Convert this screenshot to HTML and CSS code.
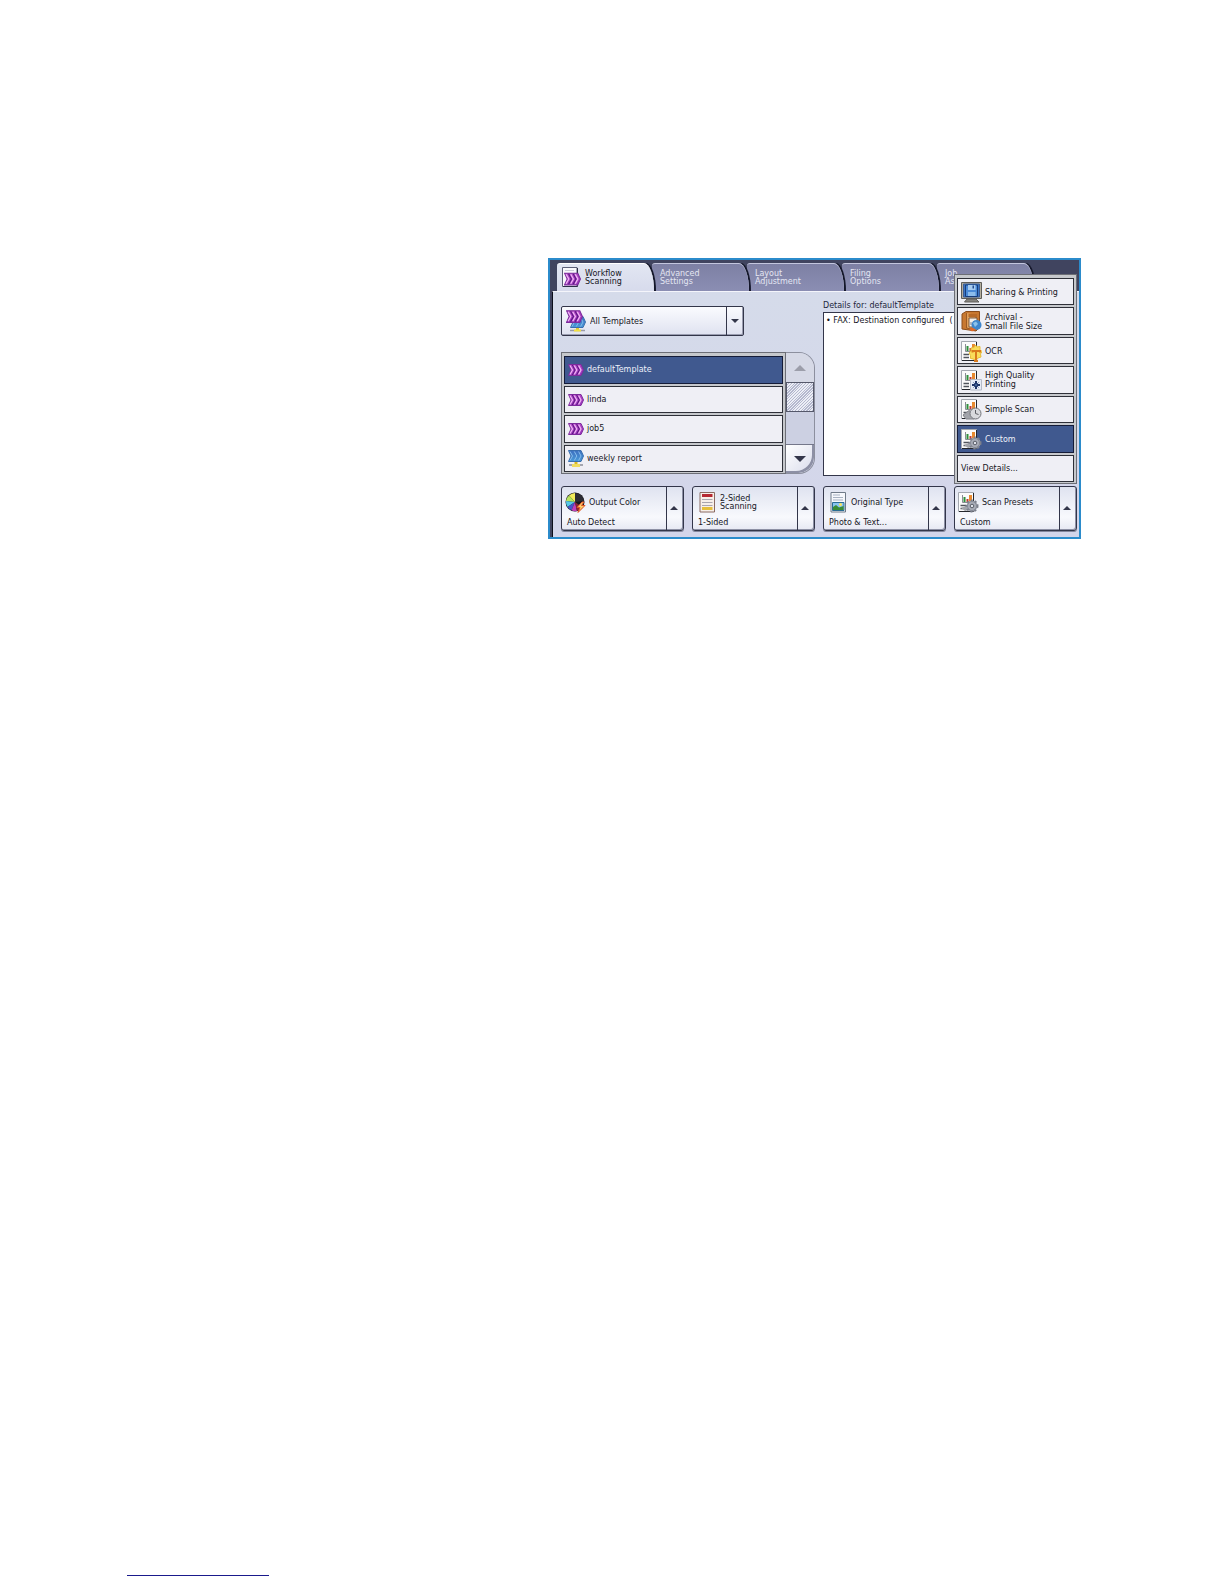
FILE: index.html
```html
<!DOCTYPE html>
<html lang="en">
<head>
  <meta charset="UTF-8" />
  <meta name="viewport" content="width=device-width, initial-scale=1.0"/>
  <title>Workflow Scanning</title>
  <link rel="stylesheet" href="styles.css">
</head>
<body>

<!-- Icon definitions -->
<svg class="defs" aria-hidden="true">
  <defs>
    <linearGradient id="purple" x1="0" y1="0" x2="0" y2="1">
      <stop offset="0" stop-color="#b044c4"/>
      <stop offset="1" stop-color="#9a34bc"/>
    </linearGradient>
    <linearGradient id="blue" x1="0" y1="0" x2="0" y2="1">
      <stop offset="0" stop-color="#3d6fc0"/>
      <stop offset="1" stop-color="#4a9ad8"/>
    </linearGradient>
    <symbol id="chevrons" viewBox="0 0 16 12">
      <path d="M0.5 0.5H13L15.5 6L13 11.5H0.5L3 6Z" fill="url(#purple)" stroke="#7c2c9c"/>
      <path d="M2 1.500L4.500 6L2 10.500M6.300 1.500L8.800 6L6.300 10.500M10.600 1.500L13 6L10.600 10.500" fill="none" stroke="#f0b4f4" stroke-width="1.300"/>
      <path d="M4.300 1L7 6L4.300 11M8.600 1L11.300 6L8.600 11" fill="none" stroke="#5a1a80"/>
    </symbol>
    <symbol id="chevrons-blue" viewBox="0 0 16 12">
      <path d="M0.5 0.5H13L15.5 6L13 11.5H0.5L3 6Z" fill="url(#blue)" stroke="#3a6eae"/>
      <path d="M2 1.500L4.500 6L2 10.500M6.300 1.500L8.800 6L6.300 10.500M10.600 1.500L13 6L10.600 10.500" fill="none" stroke="#86bcec"/>
    </symbol>
    <symbol id="network" viewBox="0 0 16 18">
      <use href="#chevrons-blue" width="16" height="12"/>
      <path d="M8 12V15" stroke="#d8b820" stroke-width="3"/>
      <path d="M1 15H15" stroke="#a4a6b0" stroke-width="2"/>
      <path d="M4 15.500H12" stroke="#f0dc60" stroke-width="3"/>
    </symbol>
    <symbol id="workflow" viewBox="0 0 20 22">
      <path d="M1.500 1.500H16V20.500H1.500Z" fill="#f8f8fc" stroke="#5c6078"/>
      <path d="M4 4.500H13" stroke="#c8cad6"/>
      <path d="M2 20.500H16.500V2" fill="none" stroke="#2c3048"/>
      <use href="#chevrons" x="3" y="6" width="17" height="14"/>
    </symbol>
    <symbol id="templates" viewBox="0 0 20 22">
      <use href="#chevrons-blue" x="4" y="6" width="16" height="12"/>
      <use href="#chevrons" x="0" y="0" width="17" height="13"/>
      <path d="M11.500 18V20" stroke="#e0c830" stroke-width="3"/>
      <path d="M4 20.500H19" stroke="#9a9ca8" stroke-width="1.500"/>
      <path d="M8 20.500H15" stroke="#f2e040" stroke-width="2"/>
    </symbol>
    <symbol id="color" viewBox="0 0 21 21">
      <circle cx="10" cy="10" r="9.500" fill="#17171c"/>
      <path d="M10 10V1A9 9 0 0 0 4 3.500Z" fill="#f3ec5a"/>
      <path d="M10 10L4 3.500A9 9 0 0 0 1 9Z" fill="#b7e45c"/>
      <path d="M10 10L1 9A9 9 0 0 0 2.500 15Z" fill="#55c8e8"/>
      <path d="M10 10L2.500 15A9 9 0 0 0 6.500 18.300Z" fill="#4556c8"/>
      <path d="M10 10L6.500 18.300A9 9 0 0 0 12 19Z" fill="#c040b8"/>
      <path d="M10 10V1A9 9 0 0 1 19 9Z" fill="#2c2c34"/>
      <path d="M10 10L12 19A9 9 0 0 0 17 15Z" fill="#8c2430"/>
      <path d="M17 10L12 15.500H15L13 20.500L20 13.500H16.500L19 10Z" fill="#ffcf6a" stroke="#e0562a"/>
    </symbol>
    <symbol id="sides" viewBox="0 0 21 21">
      <path d="M4 0.500H18.500V20H4Z" fill="#f7efe9" stroke="#8a6a62"/>
      <path d="M6 3.500H16.500" stroke="#b52832" stroke-width="3"/>
      <path d="M6 7.500H16.500M6 10.500H16.500M6 13.500H16.500" stroke="#a9a5ae"/>
      <path d="M6 16.500H16.500" stroke="#e6bf3c" stroke-width="3"/>
    </symbol>
    <symbol id="original" viewBox="0 0 21 21">
      <path d="M4 0.500H18.500V20H4Z" fill="#f6f8fc" stroke="#6f7a88"/>
      <path d="M6 3H13M6 5.500H16M6 8H16" stroke="#a8b2c2"/>
      <path d="M5.500 10.500H17V18.500H5.500Z" fill="#8ac4f0" stroke="#2a6d94"/>
      <path d="M6 18V15L9 13L12 15.500L16.500 14V18Z" fill="#3a8c34"/>
      <circle cx="13.500" cy="12.500" r="1.500" fill="#fbe45a"/>
    </symbol>
    <symbol id="chart-page" viewBox="0 0 21 21">
      <path d="M0.500 0.500H15.500V19.500H0.500Z" fill="#fbfbfb" stroke="#a4a8b0"/>
      <path d="M15.500 1V19.500H1" fill="none" stroke="#24262c"/>
      <path d="M4.500 3V10.500H14" fill="none" stroke="#8a8d94"/>
      <path d="M6.500 10V5" stroke="#2f8f3a" stroke-width="2"/>
      <path d="M9.500 10V7" stroke="#c03a30" stroke-width="2"/>
      <path d="M12.500 10V3" stroke="#e88a30" stroke-width="3"/>
      <path d="M2.500 13.500H8M2.500 16.500H8M10 13.500H14M10 16.500H14" stroke="#50545c" stroke-width="1.500"/>
    </symbol>
    <symbol id="monitor" viewBox="0 0 21 21">
      <path d="M0.500 0.500H20.500V16.500H0.500Z" fill="#b4ae9e" stroke="#5e5c58"/>
      <path d="M2.500 2H18.500V15H2.500Z" fill="#3a74c4" stroke="#3c5c94"/>
      <path d="M4.500 3H16.500V14.500H4.500Z" fill="#4a8ad8" stroke="#173c7a"/>
      <path d="M7 3H14.500V8H7Z" fill="#a8ccf0"/>
      <path d="M11.500 3.500H13V6.500H11.500Z" fill="#244c90"/>
      <path d="M7 10H14.500V14H7Z" fill="#8cbcec"/>
      <path d="M6 17H15L18 20H3.500Z" fill="#85837e" stroke="#5e5c58"/>
    </symbol>
    <symbol id="archive" viewBox="0 0 21 21">
      <path d="M1 3L5 0.500H18.500V16.500L15 20L1 18Z" fill="#c87830" stroke="#8a4c1a"/>
      <path d="M5.500 2V17L15 19V4" fill="#e2a05a" stroke="#9a5a24"/>
      <path d="M7.500 3H16V6H7.500Z" fill="#b86a28"/>
      <path d="M8 7H16V16H8Z" fill="#f4f0ea" stroke="#7a5a40"/>
      <path d="M10 14V11M12.500 14V10" stroke="#7c8090"/>
      <circle cx="15.500" cy="14" r="5" fill="#3f86cc"/>
      <path d="M12 12L15 10.500L17 13L14 16Z" fill="#8dc2ea"/>
      <path d="M8 18L11 16.500L15 18.500L11 20.500Z" fill="#e06a28"/>
    </symbol>
    <symbol id="ocr" viewBox="0 0 21 21">
      <use href="#chart-page" width="21" height="21"/>
      <path d="M14.500 4L16 6L19 5.500V8.500L21 10.500L19.500 13L20 16L17 17L15 19.500L12 18L9.500 17.500V14.500L8 12L10 10L10 7L13 6.500Z" fill="#f9dc5a" stroke="#e8bc38"/>
      <path d="M11.500 11.500V10H19V11.500M15 10V20M13 20H17" fill="none" stroke="#d97a1c" stroke-width="2"/>
    </symbol>
    <symbol id="quality" viewBox="0 0 21 21">
      <use href="#chart-page" width="21" height="21"/>
      <path d="M9.500 9.500H20.500V20H9.500Z" fill="#e4eaf6" stroke="#b4bac8"/>
      <path d="M15 11V19M11 15H19" stroke="#1c3468" stroke-width="2"/>
      <path d="M12.500 12.500L17.500 17.500M17.500 12.500L12.500 17.500" stroke="#3f5f98"/>
    </symbol>
    <symbol id="simple" viewBox="0 0 21 21">
      <use href="#chart-page" width="21" height="21"/>
      <path d="M2 16L8 11.500L13 14V20H5Z" fill="#a2a4aa" stroke="#84868c"/>
      <circle cx="14.500" cy="14.500" r="5.500" fill="#d8d9dd" stroke="#73757c"/>
      <path d="M14.500 11V14.500L17.500 15.500" fill="none" stroke="#5c5e64"/>
    </symbol>
    <symbol id="gear" viewBox="0 0 21 21">
      <use href="#chart-page" width="21" height="21"/>
      <path d="M3 16L8 14L11 18L7 19Z" fill="#a2a4aa"/>
      <circle cx="14" cy="14" r="5.500" fill="#a9adb8" stroke="#7c808c" stroke-width="2" stroke-dasharray="2 2"/>
      <circle cx="14" cy="14" r="4.500" fill="#a9adb8" stroke="#868a96"/>
      <circle cx="14" cy="14" r="1.800" fill="#dfe2ea" stroke="#5a5e68"/>
    </symbol>
    <symbol id="up" viewBox="0 0 10 5"><path d="M5 0L10 5H0Z" fill="currentColor"/></symbol>
    <symbol id="down" viewBox="0 0 10 5"><path d="M0 0H10L5 5Z" fill="currentColor"/></symbol>
  </defs>
</svg>

<main>
  <section class="screen">

    <!-- Tabs -->
    <nav class="tabs">
      <button type="button" class="tab active"><svg class="icon-tab"><use href="#workflow"/></svg><span>Workflow<br>Scanning</span></button>
      <button type="button" class="tab"><span>Advanced<br>Settings</span></button>
      <button type="button" class="tab"><span>Layout<br>Adjustment</span></button>
      <button type="button" class="tab"><span>Filing<br>Options</span></button>
      <button type="button" class="tab"><span>Job<br>Assembly</span></button>
    </nav>

    <div class="panel">
      <div class="content">

        <!-- Template picker -->
        <div class="templates">
          <div class="picker">
            <svg class="icon-tab"><use href="#templates"/></svg>
            <select aria-label="Templates">
              <option>All Templates</option>
            </select>
            <span class="arrow"><svg><use href="#down"/></svg></span>
          </div>
          <div class="list-area">
            <div class="list">
              <button type="button" class="row selected"><svg class="icon-row"><use href="#chevrons"/></svg>defaultTemplate</button>
              <button type="button" class="row"><svg class="icon-row"><use href="#chevrons"/></svg>linda</button>
              <button type="button" class="row"><svg class="icon-row"><use href="#chevrons"/></svg>job5</button>
              <button type="button" class="row"><svg class="icon-row tall"><use href="#network"/></svg>weekly report</button>
            </div>
            <div class="scrollbar">
              <button type="button" class="scroll-up" aria-label="Scroll up" disabled><svg><use href="#up"/></svg></button>
              <div class="thumb"></div>
              <button type="button" class="scroll-down" aria-label="Scroll down"><svg><use href="#down"/></svg></button>
            </div>
          </div>
        </div>

        <!-- Template details -->
        <div class="details">
          <div class="details-title">Details for: defaultTemplate</div>
          <div class="details-box">• FAX: Destination configured&nbsp; (</div>
        </div>
      </div>

      <!-- Scan options -->
      <div class="options">
        <button type="button" class="option">
          <span class="option-body">
            <span class="option-name"><svg class="icon"><use href="#color"/></svg>Output Color</span>
            <span>Auto Detect</span>
          </span>
          <span class="arrow"><svg><use href="#up"/></svg></span>
        </button>
        <button type="button" class="option">
          <span class="option-body">
            <span class="option-name"><svg class="icon"><use href="#sides"/></svg><span>2-Sided<br>Scanning</span></span>
            <span>1-Sided</span>
          </span>
          <span class="arrow"><svg><use href="#up"/></svg></span>
        </button>
        <button type="button" class="option">
          <span class="option-body">
            <span class="option-name"><svg class="icon"><use href="#original"/></svg>Original Type</span>
            <span>Photo &amp; Text...</span>
          </span>
          <span class="arrow"><svg><use href="#up"/></svg></span>
        </button>
        <div class="presets">
          <button type="button" class="option" aria-haspopup="menu" aria-expanded="true">
            <span class="option-body">
              <span class="option-name"><svg class="icon"><use href="#gear"/></svg>Scan Presets</span>
              <span>Custom</span>
            </span>
            <span class="arrow"><svg><use href="#up"/></svg></span>
          </button>
          <div class="menu" role="menu">
            <button type="button" role="menuitem" class="row"><svg class="icon"><use href="#monitor"/></svg>Sharing &amp; Printing</button>
            <button type="button" role="menuitem" class="row"><svg class="icon"><use href="#archive"/></svg><span>Archival -<br>Small File Size</span></button>
            <button type="button" role="menuitem" class="row"><svg class="icon"><use href="#ocr"/></svg>OCR</button>
            <button type="button" role="menuitem" class="row"><svg class="icon"><use href="#quality"/></svg><span>High Quality<br>Printing</span></button>
            <button type="button" role="menuitem" class="row"><svg class="icon"><use href="#simple"/></svg>Simple Scan</button>
            <button type="button" role="menuitem" class="row selected"><svg class="icon"><use href="#gear"/></svg>Custom</button>
            <button type="button" role="menuitem" class="row">View Details...</button>
          </div>
        </div>
      </div>
    </div>
  </section>
</main>

<footer>
  <a href="#" class="footer-link" aria-label="Home"></a>
</footer>

</body>
</html>
```
FILE: styles.css
```css
* {
  box-sizing: border-box;
}

body {
  display: flex;
  flex-direction: column;
  min-height: 100vh;
  margin: 0;
  background: #fff;
  color: #16161e;
  font-family: "DejaVu Sans", sans-serif;
  font-size: 8px;
  line-height: 10px;
}

button, select {
  font: inherit;
  color: inherit;
  text-align: left;
  cursor: pointer;
}

svg {
  display: block;
  flex: none;
}

.defs {
  position: absolute;
  width: 0;
  height: 0;
}

main {
  display: grid;
  grid-template-columns: 421fr 533fr;
  padding: 258px 143px 0 127px;
}

.screen {
  grid-column: 2;
  border: 2px solid #2b8bcb;
  background: #40445f;
}

/* Tabs */
.tabs {
  display: flex;
  padding: 3px 0 0 7px;
}

.tab {
  position: relative;
  display: flex;
  align-items: center;
  gap: 4px;
  flex: 0 1 97px;
  height: 28px;
  margin: 0 0 0 -2px;
  padding: 1px 0 0 8px;
  border: none;
  border-top: 1px solid #c3c6de;
  border-radius: 3px 10px 0 0 / 3px 28px 0 0;
  background: linear-gradient(to bottom, #7d80a4, #8b8eb3);
  box-shadow: 2px 0 0 #14172a;
  color: #e4e6f2;
  line-height: 8px;
}

.tab:first-child {
  margin-left: 0;
}

.tab:nth-child(1) { z-index: 5; }
.tab:nth-child(2) { z-index: 4; }
.tab:nth-child(3) { z-index: 3; }
.tab:nth-child(4) { z-index: 2; }
.tab:nth-child(5) { z-index: 1; }

.tab.active {
  padding: 0 0 1px 4px;
  border-top-color: #fff;
  background: linear-gradient(to bottom, #e2e6f2, #d7dbec);
  color: #16161e;
}

.tab.active span {
  padding-top: 2px;
}

.icon-tab {
  width: 20px;
  height: 22px;
}

.icon {
  width: 21px;
  height: 21px;
}

.icon-row {
  width: 16px;
  height: 12px;
}

.icon-row.tall {
  height: 18px;
}

/* Panel */
.panel {
  margin-left: 2px;
  padding: 7px 2px 6px 8px;
  border-top: 1px solid #f4f5fb;
  border-left: 1px solid #0c0e1a;
  background: linear-gradient(to bottom, #d5dbea, #d3d5ea);
}

.content {
  display: grid;
  grid-template-columns: 1fr 1fr;
  gap: 8px;
}

.templates {
  padding: 7px 0 2px;
}

.picker {
  display: flex;
  align-items: center;
  width: 72%;
  height: 30px;
  margin-bottom: 16px;
  padding-left: 4px;
  border: 1px solid #33364a;
  border-radius: 2px;
  background: linear-gradient(to bottom, #fafbfe, #dfe2f0);
  box-shadow: inset -1px -1px 0 #9a9db0;
}

.picker select {
  flex: 1;
  height: 28px;
  padding: 1px 0 0 4px;
  border: none;
  background: none;
  appearance: none;
}

.arrow {
  display: flex;
  align-items: center;
  justify-content: center;
  align-self: stretch;
  width: 17px;
  padding: 0 2px 1px 0;
  border-left: 1px solid #33364a;
  color: #33364a;
}

.arrow svg {
  width: 8px;
  height: 4px;
}

.picker .arrow {
  padding: 0;
}

.list-area {
  display: flex;
  height: 122px;
}

.list, .menu {
  display: flex;
  flex-direction: column;
  gap: 2px;
  padding: 3px 2px 1px;
  border: 1px solid #6c6e76;
  background: #c6c8cc;
}

.list {
  flex: 1;
}

.row {
  display: flex;
  align-items: center;
  gap: 3px;
  flex: 1;
  padding: 1px 3px 0;
  border: 1px solid #2e3038;
  background: #efeff5;
}

.row.selected {
  border-color: #151c38;
  background: #40598f;
  color: #eef1fa;
}

.scrollbar {
  display: flex;
  flex-direction: column;
  width: 29px;
  border: 1px solid #8c8f9e;
  border-left: none;
  border-radius: 0 16px 16px 0;
  background: #ccd0e2;
  overflow: hidden;
}

.scrollbar svg {
  width: 12px;
  height: 6px;
}

.scroll-up, .scroll-down {
  display: flex;
  align-items: center;
  justify-content: center;
  height: 29px;
  padding: 0;
  border: none;
  background: #d6d9e6;
  color: #9c9eaa;
}

.scroll-down {
  margin-top: auto;
  border-top: 1px solid #74778a;
  border-radius: 0 0 16px 0;
  background: linear-gradient(to bottom right, #fff, #d8dbeb);
  box-shadow: inset -2px -2px 0 #8d90a5;
  color: #33364a;
}

.thumb {
  height: 30px;
  border: 1px solid #55586a;
  background: repeating-linear-gradient(135deg, #eceef6 0 1px, #b4b8ce 1px 2px);
}

/* Details */
.details {
  display: flex;
  flex-direction: column;
}

.details-title {
  padding: 2px 0 1px;
  color: #23263c;
}

.details-box {
  flex: 1;
  padding: 3px 2px;
  border: 1px solid #33364a;
  background: #fff;
  white-space: nowrap;
}

/* Scan options */
.options {
  display: grid;
  grid-template-columns: repeat(4, 1fr);
  gap: 8px;
  margin-top: 10px;
}

.option {
  display: flex;
  width: 100%;
  height: 45px;
  padding: 0;
  border: 1px solid #33364a;
  border-radius: 3px;
  background: linear-gradient(to bottom, #dfe3f0, #f8f9fd 70%, #e6e8f3);
  box-shadow: inset -1px -1px 0 #8d90a5, 0 1px 0 #83869c;
}

.option-body {
  display: flex;
  flex: 1;
  flex-direction: column;
  gap: 5px;
  padding: 5px 0 0 5px;
}

.option-name {
  display: flex;
  align-items: center;
  gap: 3px;
  margin-left: -2px;
  line-height: 8px;
}

/* Presets menu, opens upwards over the panel */
.presets {
  position: relative;
}

.menu {
  position: absolute;
  right: 0;
  bottom: 47px;
  left: 0;
  z-index: 10;
  height: 210px;
}

.menu .row {
  line-height: 9px;
}

footer {
  margin-top: auto;
  padding: 0 127px 8px;
}

.footer-link {
  display: block;
  width: 142px;
  border-bottom: 1px solid #1a1a8c;
}
```
